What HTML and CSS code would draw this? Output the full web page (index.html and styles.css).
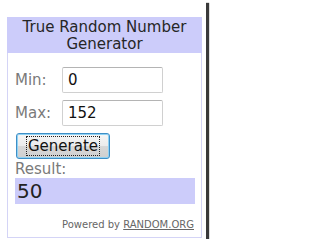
FILE: index.html
```html
<!DOCTYPE html>
<html>
<head>
<meta charset="utf-8">
<link rel="stylesheet" href="styles.css">
</head>
<body>
<div class="frame">
  <div class="widget">
    <div class="header">
      <div class="title-line">True Random Number</div>
      <div class="title-line">Generator</div>
    </div>
    <div class="content">
      <div class="row">
        <span class="label">Min:</span>
        <span class="input">0</span>
      </div>
      <div class="row">
        <span class="label">Max:</span>
        <span class="input">152</span>
      </div>
      <div class="button"><span class="focus">Generate</span></div>
      <div class="result-label">Result:</div>
      <div class="result">50</div>
      <div class="powered">Powered by <span class="link">RANDOM.ORG</span></div>
    </div>
  </div>
</div>
</body>
</html>
```

FILE: styles.css
```css
html, body {
  margin: 0;
  padding: 0;
  background: #ffffff;
}

.frame {
  width: 206px;
  height: 239px;
  box-sizing: border-box;
  padding: 17px 0 0 7px;
  background: #ffffff;
  box-shadow: 3px 3px 1px #3a3a3a;
  font-family: "DejaVu Sans", Verdana, sans-serif;
}

.widget {
  width: 195px;
  height: 221px;
  box-sizing: border-box;
  border: 1px solid #d4d4f6;
  border-top: none;
  display: flex;
  flex-direction: column;
}

.header {
  background: #ccccfa;
  color: #262626;
  font-size: 15px;
  text-align: center;
  height: 36px;
  box-sizing: border-box;
  padding-top: 2px;
  margin: 0 -1px;
}

.title-line {
  line-height: 17px;
}

.content {
  display: flex;
  flex-direction: column;
  padding: 14px 6px 0 7px;
}

.row {
  display: flex;
  align-items: center;
  height: 26px;
  margin-bottom: 7px;
}

.label {
  width: 47px;
  color: #7a7a7a;
  font-size: 15px;
}

.input {
  width: 101px;
  height: 26px;
  box-sizing: border-box;
  border: 1px solid #d0d0d0;
  border-top-color: #b4b4b4;
  border-radius: 2px;
  padding: 0 0 0 5px;
  font-size: 15px;
  line-height: 24px;
  color: #111111;
}

.button {
  margin-left: 1px;
  width: 94px;
  height: 26px;
  box-sizing: border-box;
  border: 1px solid #3e8ec6;
  border-radius: 3px;
  box-shadow: inset 0 0 0 1px #8fd2f4;
  background: linear-gradient(#f6f6f6 0%, #ececec 48%, #d8d8d8 52%, #cfcfcf 100%);
  display: flex;
  align-items: center;
  justify-content: center;
  font-size: 15px;
  color: #111111;
}

.focus {
  border: 1px dotted #222222;
  line-height: 18px;
  padding: 0 1px;
}

.result-label {
  color: #7a7a7a;
  font-size: 15px;
  line-height: 17px;
  margin-top: 2px;
}

.result {
  background: #ccccfa;
  height: 26px;
  font-size: 20px;
  line-height: 26px;
  color: #222222;
  padding-left: 2px;
}

.powered {
  margin-top: 15px;
  text-align: right;
  font-size: 10px;
  line-height: 12px;
  color: #666666;
  padding-right: 1px;
}

.link {
  text-decoration: underline;
}
```
